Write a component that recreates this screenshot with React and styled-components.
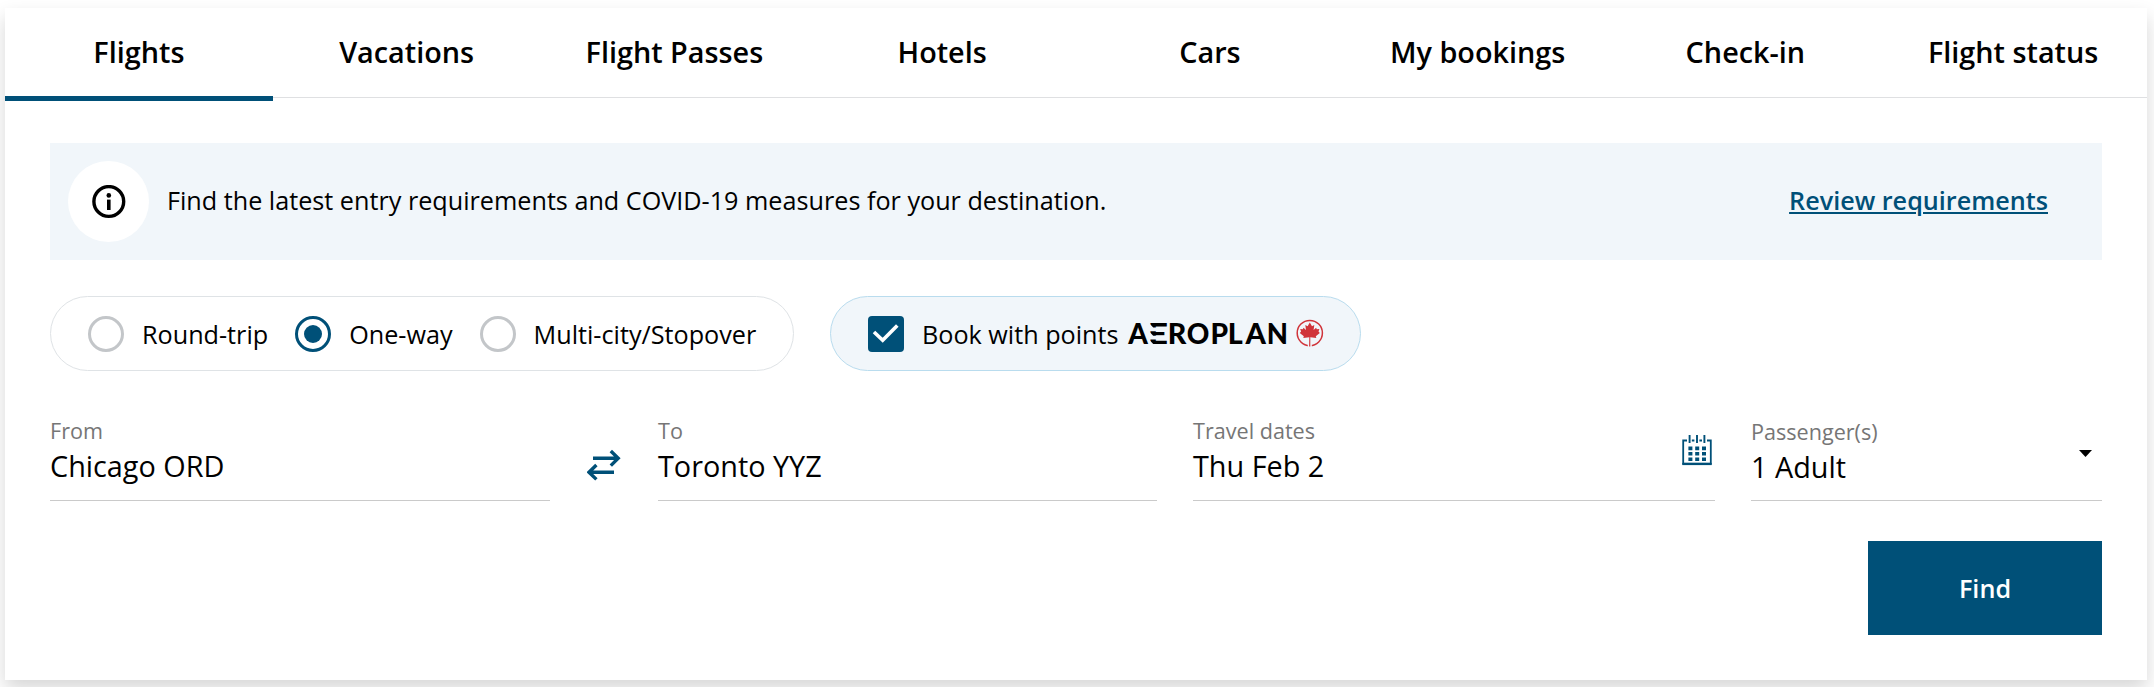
import styled, {createGlobalStyle} from "styled-components";

const GlobalStyle = createGlobalStyle`
  * {
    box-sizing: border-box;
  }

  body {
    min-height: 687px;
    margin: 0;
    padding: 8px 7px 7px 5px;
    background-color: #ffffff;
    color: #000000;
    font-family: "Open Sans", "Noto Sans", sans-serif;
  }
`

const Wrapper = styled.main`
  height: 672px;
  background-color: #ffffff;
  box-shadow: 0 9px 18px 0 rgba(0, 0, 0, 0.16);
`

const Tabs = styled.nav`
  height: 90px;
  display: grid;
  grid-template-columns: repeat(8, 1fr);
  border-bottom: 1px solid #dfe0e2;
`

const Tab = styled.a`
  position: relative;
  font-size: 28.8px;
  font-weight: 600;
  line-height: 88px;
  text-align: center;
  white-space: nowrap;

  &::after {
    content: "";
    display: ${({ $active }) => ($active ? "block" : "none")};
    position: absolute;
    left: 0;
    right: 0;
    bottom: -4px;
    height: 5px;
    background-color: #005078;
  }
`

const Content = styled.div`
  padding: 45px 45px 0;
  display: flex;
  flex-direction: column;
`

const Banner = styled.div`
  height: 117px;
  padding: 0 54px 0 18px;
  display: flex;
  align-items: center;
  background-color: #f1f6fa;
  font-size: 25.2px;
`

const InfoCircle = styled.div`
  width: 81px;
  height: 81px;
  border-radius: 50%;
  display: flex;
  align-items: center;
  justify-content: center;
  background-color: #ffffff;
`

const BannerText = styled.p`
  flex: 1;
  margin: 0 0 3px 18px;
`

const BannerLink = styled.a`
  margin-bottom: 3px;
  color: #005078;
  font-weight: 600;
  text-decoration: underline;
  text-decoration-thickness: 2px;
  text-underline-offset: 2px;
`

const Options = styled.div`
  margin-top: 36px;
  display: flex;
  gap: 36px;
`

const Pill = styled.div`
  width: ${({ $width }) => $width}px;
  height: 75px;
  padding: 1px 36px 0 37px;
  display: flex;
  align-items: center;
  border: 1px solid ${({ $tinted }) => ($tinted ? "#b9dcee" : "#dfe3e6")};
  border-radius: 38px;
  background-color: ${({ $tinted }) => ($tinted ? "#f1f6fa" : "#ffffff")};
  font-size: 25.2px;
  white-space: nowrap;
`

const Option = styled.label`
  display: flex;
  align-items: center;
  gap: 18px;

  & + & {
    margin-left: 27px;
  }
`

const Radio = styled.span`
  width: 36px;
  height: 36px;
  border: 3.6px solid ${({ $checked }) => ($checked ? "#005078" : "#c3c6c9")};
  border-radius: 50%;
  display: flex;
  align-items: center;
  justify-content: center;

  &::after {
    content: "";
    width: 18px;
    height: 18px;
    border-radius: 50%;
    background-color: ${({ $checked }) => ($checked ? "#005078" : "transparent")};
  }
`

const Checkbox = styled.span`
  width: 36px;
  height: 36px;
  border-radius: 4px;
  background-color: #005078;
`

const AeroplanLogo = styled.svg`
  flex: none;
  margin-left: 7px;
  width: 204px;
  height: 36px;
  font-family: Lato, sans-serif;
  font-size: 28px;
  font-weight: 900;
`

const Fields = styled.div`
  margin-top: 45px;
  display: grid;
  grid-template-columns: 1107px 522px 351px;
  gap: 36px;
`

const Route = styled.div`
  display: grid;
  grid-template-columns: 500px 108px 499px;
`

const FieldWrapper = styled.div`
  height: 85px;
  padding-top: ${({ $offset }) => $offset || 0}px;
  display: flex;
  justify-content: space-between;
  border-bottom: 1px solid #cacaca;
`

const Label = styled.div`
  color: #767676;
  font-size: 21.6px;
  line-height: 29px;
`

const Value = styled.div`
  font-size: 28.8px;
  line-height: 42px;
`

const SwapButton = styled.button`
  display: flex;
  align-items: flex-start;
  align-self: start;
  padding: 33px 0 0 37px;
  border: 0;
  background: none;
`

const FieldIcon = styled.svg`
  margin: ${({ $top, $right }) => `${$top}px ${$right}px 0 0`};
`

const FindButton = styled.button`
  align-self: flex-end;
  width: 234px;
  height: 94px;
  margin-top: 40px;
  padding: 0 0 1px;
  border: 0;
  background-color: #005078;
  color: #ffffff;
  font-family: inherit;
  font-size: 25.2px;
  font-weight: 600;
`

const tabs = [
    "Flights",
    "Vacations",
    "Flight Passes",
    "Hotels",
    "Cars",
    "My bookings",
    "Check-in",
    "Flight status",
]

const trips = ["Round-trip", "One-way", "Multi-city/Stopover"]

const letters = [
    ["A", 2.3, 19.6],
    ["E", 21.7, 20.3],
    ["R", 41.7, 18.6],
    ["O", 60.8, 22.6],
    ["P", 84.4, 17.6],
    ["L", 101.8, 15],
    ["A", 119.4, 20.4],
    ["N", 140.8, 21.2],
]

const InfoIcon = () => (
    <svg width="34" height="34" viewBox="0 0 34 34">
        <circle cx="16.800" cy="16.5" r="14.9" fill="none" stroke="#000" strokeWidth="3.4"/>
        <circle cx="16.800" cy="10.4" r="2.3"/>
        <path d="M16.800 14.6v10.4" stroke="#000" strokeWidth="3.6"/>
    </svg>
)

const CheckIcon = () => (
    <svg width="36" height="36" viewBox="0 0 36 36" fill="none">
        <path d="M6 16l8.7 8.3L29.3 9.5" stroke="#fff" strokeWidth="3.6"/>
    </svg>
)

const SwapIcon = () => (
    <svg width="34" height="32" viewBox="0 0 34 32" fill="none" stroke="#005078" strokeWidth="3.4">
        <path d="M6 9.3h25M23.8 2l7.4 7.3-7.4 7.3"/>
        <path d="M27 23.2H2M9.4 16l-7.4 7.2 7.4 7.2"/>
    </svg>
)

const CalendarIcon = () => (
    <FieldIcon $top={18} $right={2} width="32" height="32" viewBox="0 0 32 32" fill="none" stroke="#005078">
        <path d="M6 6.5H2.2v23.2h27.6V6.5H26M10.8 6.5h2.6M18.4 6.5H21" strokeWidth="1.8"/>
        <path d="M1.3 30h29.4" strokeWidth="2.2"/>
        <path d="M8.6 1v8M16 1v8M23.4 1v8" strokeWidth="1.9"/>
        <path d="M7.4 14.4H25M7.4 19.8H25M7.4 25.2H25" strokeWidth="3.6" strokeDasharray="4 2.8"/>
    </FieldIcon>
)

const CaretIcon = () => (
    <FieldIcon $top={33} $right={10} width="13" height="8" viewBox="0 0 13 8">
        <path d="M0 0h13L6.5 7z"/>
    </FieldIcon>
)

const Logo = () => (
    <AeroplanLogo viewBox="0 0 204 36">
        {letters.map(([letter, x, width]) => (
            <text key={x} x={x} y="27.6" textLength={width} lengthAdjust="spacingAndGlyphs">{letter}</text>
        ))}
        {/* gaps that split the E into three bars, with slanted ends */}
        <path
            d="M23 11.500h18.500v3.800H23zM23 19.700h18.500v3.800H23zM23 7l4.200 4.500H23zM23 15.200l4.200 4.500H23zM23 23.400l4.200 4.500H23z"
            fill="#f1f6fa"
        />
        <g transform="translate(183.8 17)">
            <circle r="12.6" fill="none" stroke="#d0343a" strokeWidth="1.5"/>
            <path d="M-2 11v3H2v-3z" fill="#f1f6fa"/>
            <path
                d="M0-10.400L2.200-6.800 4.500-7.900 3.800-3 6.300-5.200 7-3.700 9.600-4 8.700-1.500 10 0 6 3.200 6.500 5 .5 4.300.5 13.500H-.7L-.5 4.300-6.500 5-6 3.200-10 0-8.700-1.500-9.600-4-7-3.700-6.300-5.200-3.800-3-4.500-7.900-2.200-6.800z"
                fill="#d0343a"
            />
        </g>
    </AeroplanLogo>
)

const Field = ({ label, value, offset, children }) => (
    <FieldWrapper $offset={offset}>
        <div>
            <Label>{label}</Label>
            <Value>{value}</Value>
        </div>
        {children}
    </FieldWrapper>
)

const App = () => (
    <>
        <GlobalStyle/>
        <Wrapper>
            <Tabs>
                {tabs.map((tab) => (
                    <Tab key={tab} $active={tab === "Flights"}>{tab}</Tab>
                ))}
            </Tabs>
            <Content>
                <Banner>
                    <InfoCircle>
                        <InfoIcon/>
                    </InfoCircle>
                    <BannerText>
                        Find the latest entry requirements and COVID-19 measures for your destination.
                    </BannerText>
                    <BannerLink>Review requirements</BannerLink>
                </Banner>
                <Options>
                    <Pill $width={744}>
                        {trips.map((trip) => (
                            <Option key={trip}>
                                <Radio $checked={trip === "One-way"}/>
                                {trip}
                            </Option>
                        ))}
                    </Pill>
                    <Pill $width={531} $tinted>
                        <Option>
                            <Checkbox>
                                <CheckIcon/>
                            </Checkbox>
                            Book with points
                        </Option>
                        <Logo/>
                    </Pill>
                </Options>
                <Fields>
                    <Route>
                        <Field label="From" value="Chicago ORD"/>
                        <SwapButton>
                            <SwapIcon/>
                        </SwapButton>
                        <Field label="To" value="Toronto YYZ"/>
                    </Route>
                    <Field label="Travel dates" value="Thu Feb 2">
                        <CalendarIcon/>
                    </Field>
                    <Field label="Passenger(s)" value="1 Adult" offset={1}>
                        <CaretIcon/>
                    </Field>
                </Fields>
                <FindButton>Find</FindButton>
            </Content>
        </Wrapper>
    </>
);

export default App;
